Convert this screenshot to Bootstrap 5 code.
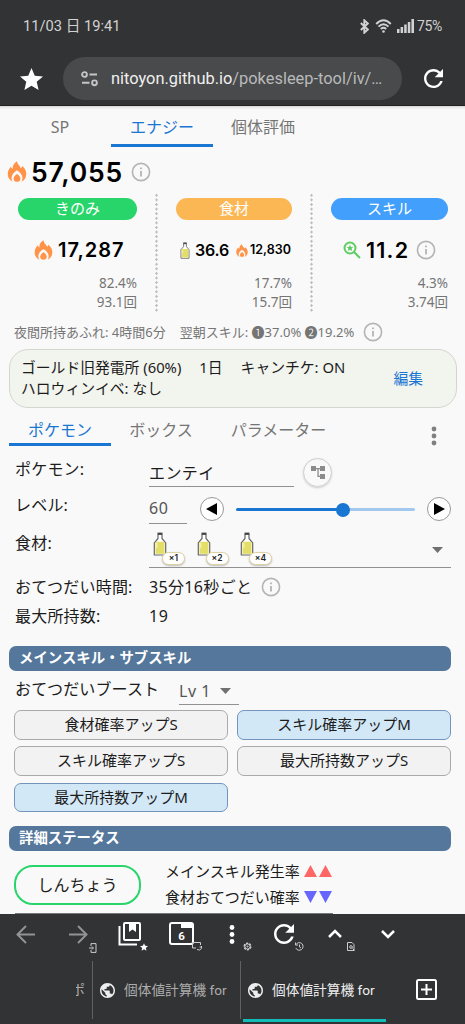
<!DOCTYPE html>
<html lang="ja">
<head>
<meta charset="utf-8">
<meta name="viewport" content="width=device-width, initial-scale=1">
<title>個体値計算機</title>
<link href="https://cdn.jsdelivr.net/npm/bootstrap@5.3.0/dist/css/bootstrap.min.css" rel="stylesheet">
<style>
body{font-family:"Noto Sans","Noto Sans CJK JP",sans-serif;font-size:16px;line-height:20px;color:#1c1c1c;background:#f9f9f9;width:465px;height:1024px;overflow:hidden}
svg{display:block;flex:none}
.chrome{background:#323335;color:#d2d2d2;font-family:Roboto,"Noto Sans CJK JP",sans-serif}
.status{height:52px;padding:0 23px 0 23px;font-size:14.700px}
.urlbar{height:54px;padding:0 22px 0 20px;border-bottom:1px solid #222}
.urlpill{width:339px;height:43px;background:#484a4b;border-radius:22px;padding-left:18px;font-size:16.4px;color:#b9babb}
.urlpill b{font-weight:400;color:#f0f0f0}
main{height:808px;overflow:hidden;background:#f9f9f9}
.toptabs{height:41px;box-shadow:inset 0 4px 3px -3px #ccc}
.tabitem{color:#757575;text-align:center;border-bottom:3px solid transparent}
.tabitem.on{color:#1976d2;border-color:#1976d2}
.num{font-family:Inter,"Noto Sans",sans-serif;font-weight:600;color:#000}
.total{height:51px;padding:0 0 2px 7px}
.total .num{font-size:26.5px;margin-left:4px;letter-spacing:.8px}
.cols{height:120px;margin-top:-5px}
.colbox{padding-top:5px}
.colbox+.colbox{background:radial-gradient(circle,#bdbdbd 1px,transparent 1.400px) left top/3px 4.6px repeat-y}
.tagpill{height:22px;border-radius:11px;color:#fff;font-size:15px;line-height:21px;text-align:center}
.vals{height:60px}
.rate{font-size:13.5px;line-height:19px;color:#757575;text-align:right;margin-top:-6px}
.foot{font-size:13px;color:#757575;height:35px;padding-left:14px;padding-top:3px;white-space:pre}
.cond{margin:1px 8px 0 9px;height:59px;border:1px solid #d3d6cf;border-radius:19px;background:#f2f4ee;font-size:14.800px;line-height:21px;padding:0 33px 0 11px;white-space:pre}
.cond>div{padding-bottom:2px}
.cond a{color:#1976d2;text-decoration:none}
.subtabs{height:38px;padding-left:9px}
.formrow{padding-left:15px}
.lab{width:134px;flex:none;letter-spacing:.2px}
.uline{border-bottom:1px solid #919191}
.roundbtn{width:24px;height:24px;border:1px solid #999;border-radius:50%;background:#fff;display:flex;align-items:center;justify-content:center}
.treebtn{width:29px;height:29px;border:1px solid #ccc;border-radius:50%;box-shadow:0 1px 2px #ccc;display:flex;align-items:center;justify-content:center}
.track{width:179px;height:3px;border-radius:2px;background:linear-gradient(90deg,#1976d2 60%,#a3c8ed 60%)}
.knob{width:14px;height:14px;border-radius:50%;background:#1976d2;margin-left:100px;position:relative;top:-5.5px}
.bottle{position:relative;width:43.500px;height:34px}
.bottle span{position:absolute;left:9px;top:20px;width:23px;height:13px;border:1px solid #e0d2a0;border-radius:7px;background:#fff;font:600 8.5px/11px Inter,sans-serif;text-align:center;box-shadow:0 1px 2px #bbb;color:#222}
.sect{margin:0 14px 0 9px;height:25px;border-radius:7px;background:#54779b;color:#fff;font-weight:700;font-size:14.400px;line-height:24px;padding-left:10px}
.chips{display:grid;grid-template-columns:214px 214px;gap:6.500px 9px;padding-left:14px}
.chipbox{height:29.800px;border:1px solid #a9a9a9;border-radius:7px;background:#f2f2f2;text-align:center;font-size:15px;line-height:27px}
.chipbox.on{background:#d2e8f7;border-color:#7394bc}
.nature{width:127px;height:40px;border:2px solid #28d56b;border-radius:19px;text-align:center;line-height:37px}
.bottom{height:110px}
.tools{height:46px;padding-left:16px}
.cell{width:51.5px;height:30px;position:relative;flex:none}
.cell>svg+svg{position:absolute;left:24px;top:19px}
.btab{height:58px;border-left:1px solid #606163;font-size:13.700px;width:148px;padding-left:7px;color:#acacac;flex:none}
.btab.on{color:#eee}
.btab span{white-space:nowrap}
.peek{width:9px;height:20px;display:flex;justify-content:flex-end;overflow:hidden}
</style>
</head>
<body>
<svg width="0" height="0" class="position-absolute">
<symbol id="fire" viewBox="0 0 20 22"><path d="M10 .300c.3 3.200 2.800 4.500 4 7 .8-.4 1.400-1.100 1.600-2 2.500 2.300 4.100 5 4.100 8.200 0 4-2.200 7-5.700 8.300H6C2.500 20.500.3 17.700.3 13.700c0-3.200 1.400-5.700 3.300-7.800.3 1.200.9 1.900 1.900 2.200C5.300 4.800 6.900 2 10 .300z" fill="#ff9448"/><path d="M10 9.800c3.500 2.300 5.700 5 5.700 8 0 1.500-.5 3-1.300 4.200H5.600c-.8-1.200-1.300-2.700-1.300-4.200 0-3 2.200-5.700 5.700-8z" fill="#f9f9f9"/><path d="M10 13.600c2.300 1.500 3.600 3.200 3.600 4.900 0 2-1.500 3.300-3.600 3.300s-3.600-1.300-3.600-3.300c0-1.700 1.300-3.400 3.600-4.900z" fill="#ff9448"/></symbol>
<symbol id="info" viewBox="0 0 20 20"><circle cx="10" cy="10" r="8.600" fill="none" stroke="#b4b4b4" stroke-width="1.600"/><path d="M10 9v5.500M10 5.400v1.900" stroke="#b4b4b4" stroke-width="1.800"/></symbol>
<symbol id="oil" viewBox="0 0 14 24"><path d="M5 2.500h4v4l3.700 4.300V23H1.300V10.800L5 6.500z" fill="#fff" stroke="#666" stroke-width="1.200" stroke-linejoin="round"/><path d="M4.500.600h5v2h-5z" fill="#444"/><path d="M2.500 9.800h9v12h-9z" fill="#e3de67"/><path d="M3.800 11v5" stroke="#f6f4b4" stroke-width="1.300"/></symbol>
<symbol id="globe" viewBox="2 2 20 20"><path fill="currentColor" d="M12 2C6.480 2 2 6.480 2 12s4.480 10 10 10 10-4.480 10-10S17.520 2 12 2zm-1 17.930c-3.950-.490-7-3.850-7-7.930 0-.620.080-1.210.210-1.790L9 15v1c0 1.100.900 2 2 2v1.930zm6.900-2.540c-.260-.810-1-1.390-1.900-1.390h-1v-3c0-.550-.450-1-1-1H8v-2h2c.550 0 1-.450 1-1V7h2c1.100 0 2-.900 2-2v-.410c2.930 1.190 5 4.060 5 7.410 0 2.080-.800 3.970-2.100 5.390z"/></symbol>
<symbol id="reload" viewBox="4 4 16 16"><path fill="currentColor" d="M17.650 6.350C16.200 4.900 14.210 4 12 4c-4.420 0-7.990 3.580-7.990 8s3.570 8 7.990 8c3.730 0 6.840-2.550 7.730-6h-2.080c-.820 2.330-3.040 4-5.650 4-3.310 0-6-2.690-6-6s2.690-6 6-6c1.660 0 3.140.690 4.220 1.780L13 11h7V4l-2.350 2.350z"/></symbol>
<symbol id="starry" viewBox="2 2 20 19"><path fill="#fff" d="M12 17.270L18.180 21l-1.640-7.030L22 9.240l-7.190-.610L12 2 9.190 8.630 2 9.240l5.460 4.730L5.820 21z"/></symbol>
</svg>

<header class="chrome">
  <div class="status d-flex align-items-center">
    <span>11/03 日 19:41</span>
    <svg class="ms-auto" width="9" height="15" viewBox="0 0 9 15" fill="none" stroke="#d2d2d2" stroke-width="1.900"><path d="M.8 4l7 6.500-3.500 3.200V1.300L7.800 4.500.8 11"/></svg>
    <svg style="margin-left:6px" width="17" height="14" viewBox="0 0 16 14" fill="none" stroke="#d2d2d2" stroke-width="1.900"><path d="M.7 5Q8-2.400 15.300 5M3 7.600q5-4.800 10 0M5.300 10q2.700-2.400 5.400 0"/><circle cx="8" cy="12.500" r="1.300" fill="#d2d2d2" stroke="none"/></svg>
    <svg style="margin-left:5px" width="17" height="14" viewBox="0 0 17 14" fill="#d2d2d2"><path d="M0 10h2.500v4H0zM3.600 8h2.500v6H3.600zM7.200 5.500h2.500V14H7.200zM10.800 3h2.500v11h-2.500zM14.400 0H17v14h-2.600z"/></svg>
    <span style="margin-left:3px;font-size:14px;letter-spacing:-.3px">75%</span>
  </div>
  <div class="urlbar d-flex align-items-center">
    <svg width="23" height="22"><use href="#starry"/></svg>
    <div class="urlpill d-flex align-items-center" style="margin-left:20px">
      <svg width="17" height="16" viewBox="0 0 17 16" fill="none" stroke="#c5c5c5" stroke-width="1.900"><circle cx="3.500" cy="3.500" r="2.400"/><path d="M8.500 3.500H16M1 11.800h7.500"/><circle cx="13.500" cy="11.800" r="2.400"/></svg>
      <span style="margin-left:13px"><b>nitoyon.github.io</b>/pokesleep-tool/iv/…</span>
    </div>
    <svg class="ms-auto text-white" width="19" height="19"><use href="#reload"/></svg>
  </div>
</header>

<main>
  <nav class="toptabs d-flex">
    <div class="tabitem" style="width:102px;margin-left:9px;padding-top:11px">SP</div>
    <div class="tabitem on" style="width:102px;padding-top:11px">エナジー</div>
    <div class="tabitem" style="width:100px;padding-top:11px">個体評価</div>
  </nav>
  <div class="total d-flex align-items-center">
    <svg width="20" height="21"><use href="#fire"/></svg><span class="num">57,055</span>
    <svg width="20" height="20" style="margin-left:8px"><use href="#info"/></svg>
  </div>
  <div class="cols d-flex">
    <section class="colbox" style="width:155px;padding-left:18px;padding-right:18px">
      <div class="tagpill" style="background:#28d56b">きのみ</div>
      <div class="vals d-flex align-items-center" style="padding-left:16px"><svg width="19" height="20"><use href="#fire"/></svg><span class="num" style="font-size:20px;letter-spacing:1px;margin-left:5px">17,287</span></div>
      <div class="rate">82.4%<br>93.1回</div>
    </section>
    <section class="colbox" style="width:155px;padding-left:21px;padding-right:18px">
      <div class="tagpill" style="background:#fcb755">食材</div>
      <div class="vals d-flex align-items-center" style="padding-left:3px"><svg width="12" height="17"><use href="#oil"/></svg><span class="num" style="font-size:16px;letter-spacing:-.2px;margin-left:4px">36.6</span><svg width="12" height="13" style="margin-left:7px"><use href="#fire"/></svg><span class="num" style="font-size:12.500px;margin-left:2px">12,830</span></div>
      <div class="rate">17.7%<br>15.7回</div>
    </section>
    <section class="colbox" style="width:155px;padding-left:21px;padding-right:17px">
      <div class="tagpill" style="background:#429ffc">スキル</div>
      <div class="vals d-flex align-items-center" style="padding-left:12px"><svg width="18" height="18" viewBox="0 0 18 18" fill="none" stroke="#5ccd62" stroke-width="2"><circle cx="7" cy="7" r="5.500"/><path d="M11 11l6 6"/><path d="M7 3.700l1 2.200 2.300.2-1.700 1.500.5 2.300L7 8.700 4.900 9.900l.5-2.300-1.700-1.500L6 5.900z" fill="#5ccd62" stroke="none"/></svg><span class="num" style="font-size:21.500px;letter-spacing:1.200px;margin-left:5px">11.2</span><svg width="20" height="20" style="margin-left:7px"><use href="#info"/></svg></div>
      <div class="rate">4.3%<br>3.74回</div>
    </section>
  </div>
  <div class="foot d-flex align-items-center"><span>夜間所持あふれ: 4時間6分</span><span style="margin-left:14px">翌朝スキル: ❶37.0% ❷19.2%</span><svg width="20" height="20" style="margin-left:9px"><use href="#info"/></svg></div>
  <div class="cond d-flex align-items-center justify-content-between"><div>ゴールド旧発電所 (60%)<span style="margin-left:18px">1日</span><span style="margin-left:18px">キャンチケ: ON</span><br>ハロウィンイベ: なし</div><a href="#">編集</a></div>
  <nav class="subtabs d-flex">
    <div class="tabitem on" style="width:102px;padding-top:12px">ポケモン</div>
    <div class="tabitem" style="width:100px;padding-top:12px">ボックス</div>
    <div class="tabitem" style="width:135px;padding-top:12px">パラメーター</div>
    <svg width="6" height="20" viewBox="0 0 6 20" fill="#808080" style="margin:18px 0 0 85px"><circle cx="3" cy="3" r="2.400"/><circle cx="3" cy="10" r="2.400"/><circle cx="3" cy="17" r="2.400"/></svg>
  </nav>

  <div class="formrow d-flex" style="height:44px;padding-top:12px"><div class="lab" style="padding-top:1px">ポケモン:</div>
    <div class="uline" style="width:145px;height:29px;padding-top:5px;letter-spacing:.4px">エンテイ</div>
    <div class="treebtn" style="margin-left:9px"><svg width="14" height="13" viewBox="0 0 14 13" fill="#8c8c8c"><path d="M0 0h5v5H0zM9 0h5v5H9zM9 8h5v5H9zM5 2h4v1.300H5zM6.400 2h1.300v9H6.400zM7 9.700h2V11H7z"/></svg></div>
  </div>
  <div class="formrow d-flex" style="height:36px"><div class="lab" style="padding-top:5px">レベル:</div>
    <div class="uline" style="width:38px;height:34px;padding-top:8px;color:#555;letter-spacing:.7px">60</div>
    <div class="roundbtn" style="margin:7px 0 0 13px"><svg width="12" height="12"><path d="M11 0v12L0 6z"/></svg></div>
    <div class="track" style="margin:18px 0 0 12px"><div class="knob"></div></div>
    <div class="roundbtn" style="margin:7px 0 0 12px"><svg width="12" height="12"><path d="M1 0v12l11-6z"/></svg></div>
  </div>
  <div class="formrow d-flex" style="height:43px"><div class="lab" style="padding-top:7px">食材:</div>
    <div class="uline d-flex" style="width:302px;height:42px;padding:6px 0 0 4px">
      <div class="bottle"><svg width="14" height="24"><use href="#oil"/></svg><span>×1</span></div>
      <div class="bottle"><svg width="14" height="24"><use href="#oil"/></svg><span>×2</span></div>
      <div class="bottle"><svg width="14" height="24"><use href="#oil"/></svg><span>×4</span></div>
      <svg width="11" height="6" style="margin:15px 8px 0 auto" fill="#707070"><path d="M0 0h11L5.500 6z"/></svg>
    </div>
  </div>
  <div class="formrow d-flex align-items-center" style="height:36px"><div class="lab">おてつだい時間:</div><span style="letter-spacing:.35px">35分16秒ごと</span><svg width="20" height="20" style="margin-left:9px"><use href="#info"/></svg></div>
  <div class="formrow d-flex" style="height:41px;padding-top:1px"><div class="lab">最大所持数:</div><span style="letter-spacing:.6px">19</span></div>

  <h2 class="sect">メインスキル・サブスキル</h2>
  <div class="formrow d-flex" style="height:39px"><div style="width:164px;padding-top:8px;letter-spacing:.15px">おてつだいブースト</div>
    <div class="uline d-flex" style="width:60px;height:33.500px;padding-top:10px;color:#555"><span style="letter-spacing:.5px">Lv 1</span><svg width="11" height="6" style="margin:7px 0 0 9px" fill="#707070"><path d="M0 0h11L5.500 6z"/></svg></div>
  </div>
  <div class="chips">
    <div class="chipbox">食材確率アップS</div><div class="chipbox on">スキル確率アップM</div>
    <div class="chipbox">スキル確率アップS</div><div class="chipbox">最大所持数アップS</div>
    <div class="chipbox on">最大所持数アップM</div>
  </div>
  <h2 class="sect" style="margin-top:13.600px">詳細ステータス</h2>
  <div class="d-flex" style="padding:7px 0 0 14px">
    <div class="nature" style="margin-top:7px">しんちょう</div>
    <div style="margin-left:24px;font-size:15px;line-height:26px">
      <div class="d-flex align-items-center">メインスキル発生率<svg width="28" height="12" style="margin-left:4px" fill="#ff6666"><path d="M6.500 0L13 12H0zM21.500 0L28 12H15z"/></svg></div>
      <div class="d-flex align-items-center">食材おてつだい確率<svg width="28" height="12" style="margin-left:4px" fill="#6666ff"><path d="M6.500 12L13 0H0zM21.500 12L28 0H15z"/></svg></div>
    </div>
  </div>
  <div style="margin:3px 0 0 15px;width:318px;height:4px;background:#777"></div>
</main>

<footer class="chrome bottom">
  <div class="tools d-flex" style="padding-top:10px">
    <div class="cell"><svg width="20" height="20" viewBox="0 0 20 20" fill="none" stroke="#929394" stroke-width="2"><path d="M19 10.500H2M10 2l-8.500 8.500L10 19"/></svg></div>
    <div class="cell"><svg width="20" height="20" viewBox="0 0 20 20" fill="none" stroke="#929394" stroke-width="2"><path d="M1 10.500h17M10 2l8.500 8.500L10 19"/></svg><svg width="8" height="10" viewBox="0 0 8 10" fill="none" stroke="#ccc" style="left:21px"><path d="M2 3V.6h5v8.800H2V7M0 5h4M3 3.500L4.500 5 3 6.500"/></svg></div>
    <div class="cell"><svg width="24" height="24" viewBox="0 0 24 24" fill="none" stroke="#fff" stroke-width="2" style="margin-top:-2px;margin-left:-1px"><rect x="6" y="1" width="16" height="17" rx="1"/><path d="M1.500 4v18.500H19"/><path d="M11 1h7v9l-3.500-2.500L11 10z" fill="#fff" stroke="none"/></svg><svg width="8" height="8" style="left:21px;top:19px"><use href="#starry"/></svg></div>
    <div class="cell"><svg width="26" height="24" viewBox="0 0 26 24" fill="none" stroke="#fff" stroke-width="2" style="margin-top:-2px;margin-left:-2px"><rect x="1" y="1" width="23" height="21" rx="2"/><path d="M12 1h12v5H12z" fill="#fff" stroke="none"/><text x="12.500" y="17.500" text-anchor="middle" font-size="11.500" font-weight="700" fill="#fff" stroke="none">6</text></svg><svg width="10" height="9" viewBox="0 0 10 9" fill="none" stroke="#ccc" style="left:21px;top:18px"><path d="M4 6H.5V.5h8V3M9.500 4v2.500Q8 9 5 7.500M7.500 5h2"/></svg></div>
    <div class="cell" style="padding-left:7px"><svg width="6" height="22" viewBox="0 0 6 22" fill="#fff"><circle cx="3" cy="3.500" r="2.400"/><circle cx="3" cy="10.500" r="2.400"/><circle cx="3" cy="17.500" r="2.400"/></svg><svg width="9" height="9" viewBox="0 0 9 9" fill="none" stroke="#ccc" style="left:21px;top:18px"><circle cx="4.500" cy="4.500" r="3.300" stroke-width="1.500" stroke-dasharray="2.200 1.200"/><circle cx="4.500" cy="4.500" r="2.600"/><circle cx="4.500" cy="4.500" r=".6"/></svg></div>
    <div class="cell text-white"><svg width="20" height="20"><use href="#reload"/></svg><svg width="9" height="9" viewBox="0 0 9 9" fill="none" stroke="#ccc" style="left:21px;top:18px"><path d="M1 2.500A3.800 3.800 0 1 1 .8 6M.5.500v2.500H3M4.500 2.500V5l1.500 1"/></svg></div>
    <div class="cell" style="padding:5px 0 0 3px"><svg width="14" height="9" viewBox="0 0 14 9" fill="none" stroke="#fff" stroke-width="2.500"><path d="M1 8l6-6 6 6"/></svg><svg width="8" height="9" viewBox="0 0 8 9" fill="none" stroke="#ccc" style="left:22px;top:18px"><path d="M.5.500h4.500l2 2v6H.5zM5.500 6.500l2 2"/><circle cx="4" cy="5" r="1.300"/></svg></div>
    <div class="cell" style="padding:6px 0 0 4px"><svg width="14" height="9" viewBox="0 0 14 9" fill="none" stroke="#fff" stroke-width="2.500"><path d="M1 1l6 6 6-6"/></svg></div>
  </div>
  <div class="d-flex" style="padding-top:1px">
    <div class="d-flex justify-content-end" style="width:92px;padding:19px 7px 0 0;font-size:14px;color:#acacac"><span class="peek"><span>ポ</span></span></div>
    <div class="btab d-flex align-items-center"><svg width="15" height="15" style="color:#eee"><use href="#globe"/></svg><span style="margin-left:9px">個体値計算機 for</span></div>
    <div class="btab on d-flex align-items-center"><svg width="15" height="15"><use href="#globe"/></svg><span style="margin-left:9px">個体値計算機 for</span></div>
    <svg width="22" height="22" viewBox="0 0 22 22" fill="none" stroke="#fff" stroke-width="2" style="margin:18px 0 0 28px"><rect x="1" y="1" width="19" height="19" rx="1.500"/><path d="M10.500 5v11M5 10.500h11"/></svg>
  </div>
  <div style="width:143px;height:3px;margin-left:243px;background:#12bcb8"></div>
</footer>
</body>
</html>
